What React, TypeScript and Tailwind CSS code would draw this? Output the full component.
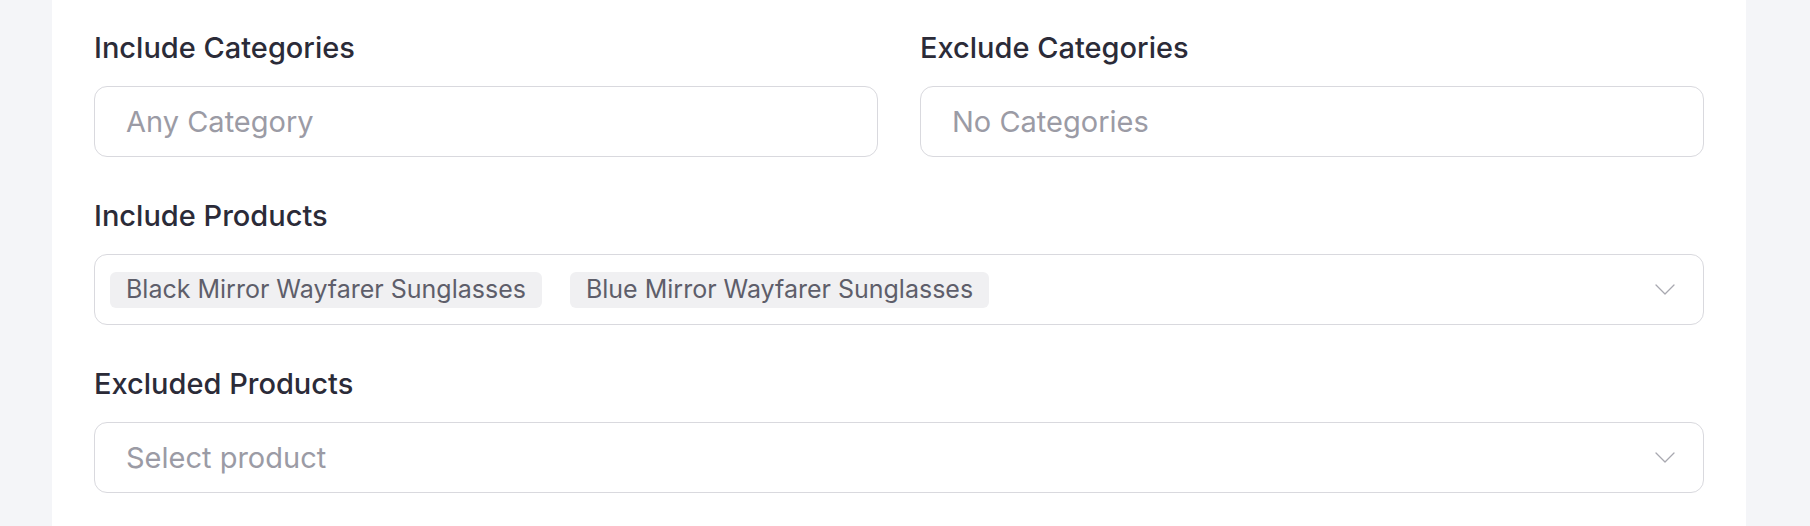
import React from "react";

const Chevron = () => (
  <svg width="20" height="11" viewBox="0 0 20 11" fill="none" className="shrink-0">
    <path d="M1 1l9 9 9-9" stroke="#a8a8b0" strokeWidth="1.3" strokeLinecap="round" strokeLinejoin="round" />
  </svg>
);

const Label: React.FC<{ children: React.ReactNode }> = ({ children }) => (
  <label className="block text-[29px] leading-[34px] font-medium text-[#2b2b38] mb-[21px]">{children}</label>
);

const Tag: React.FC<{ children: React.ReactNode }> = ({ children }) => (
  <span className="inline-flex items-center h-[36px] px-[16px] rounded-[6px] bg-[#f0f0f2] text-[25px] text-[#5e5e6a]">
    {children}
  </span>
);

export default function App() {
  return (
    <div className="min-h-screen bg-[#f4f5f8] pl-[52px] pr-[64px]" style={{ fontFamily: "Inter, 'Liberation Sans', sans-serif" }}>
      <div className="min-h-screen bg-white px-[42px] pt-[31px]">
        <div className="grid grid-cols-2 gap-x-[42px]">
          <div>
            <Label>Include Categories</Label>
            <div className="h-[71px] rounded-[13px] border border-[#d9d9de] flex items-center px-[31px] text-[29px] text-[#9b9ba5]">
              Any Category
            </div>
          </div>
          <div>
            <Label>Exclude Categories</Label>
            <div className="h-[71px] rounded-[13px] border border-[#d9d9de] flex items-center px-[31px] text-[29px] text-[#9b9ba5]">
              No Categories
            </div>
          </div>
        </div>

        <div className="mt-[42px]">
          <Label>Include Products</Label>
          <div className="h-[71px] rounded-[13px] border border-[#d9d9de] flex items-center pl-[15px] pr-[28px]">
            <div className="flex flex-1 items-center gap-[28px]">
              <Tag>Black Mirror Wayfarer Sunglasses</Tag>
              <Tag>Blue Mirror Wayfarer Sunglasses</Tag>
            </div>
            <Chevron />
          </div>
        </div>

        <div className="mt-[42px]">
          <Label>Excluded Products</Label>
          <div className="h-[71px] rounded-[13px] border border-[#d9d9de] flex items-center pl-[31px] pr-[28px]">
            <span className="flex-1 text-[29px] text-[#9b9ba5]">Select product</span>
            <Chevron />
          </div>
        </div>
      </div>
    </div>
  );
}
